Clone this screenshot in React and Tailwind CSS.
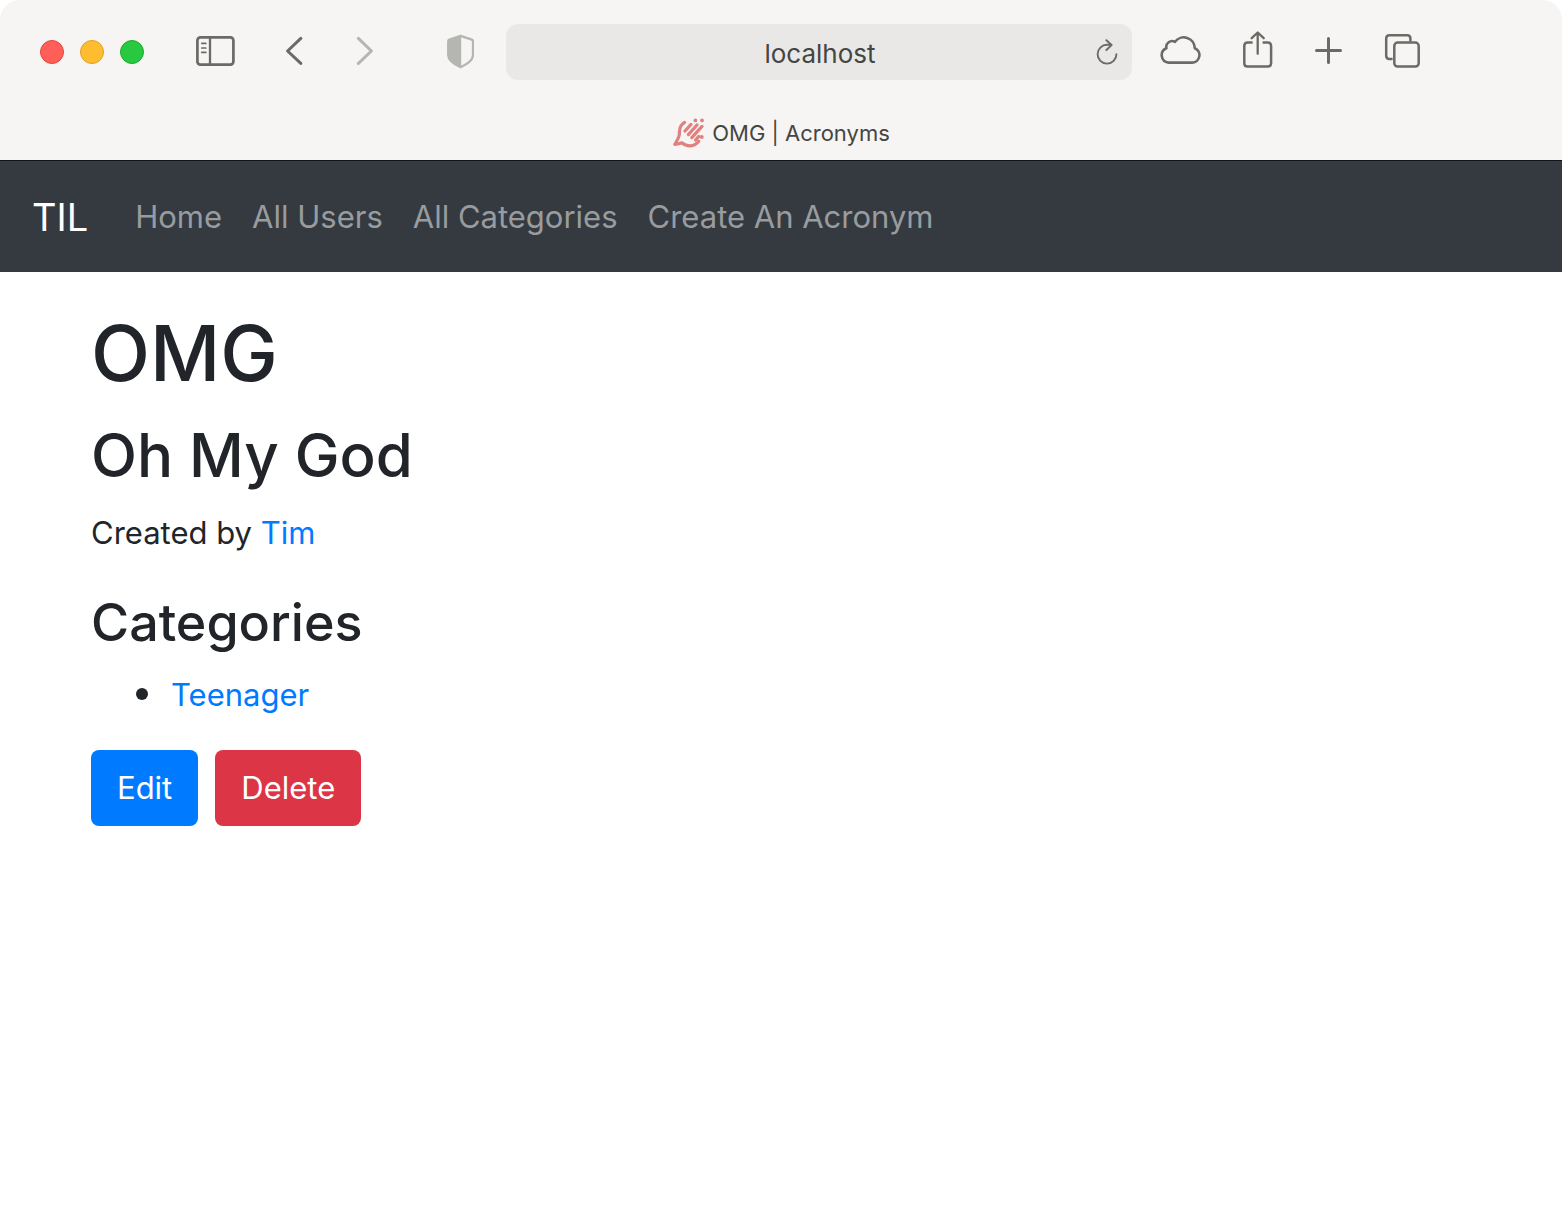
import React from "react";

const NAV_LINKS = ["Home", "All Users", "All Categories", "Create An Acronym"];

function IconButton({ label, className = "", children }) {
  return (
    <button type="button" aria-label={label} className={`block shrink-0 text-[#6b6a67] ${className}`}>
      {children}
    </button>
  );
}

const stroke = {
  fill: "none",
  stroke: "currentColor",
  strokeLinecap: "round",
  strokeLinejoin: "round",
  className: "block",
};

function SidebarIcon() {
  return (
    <svg width="39" height="42" viewBox="0 0 39 42" {...stroke} strokeWidth="2.7">
      <rect x="1.4" y="6.4" width="36" height="27.2" rx="3" />
      <path d="M14 6.5v27" strokeWidth="2.3" />
      <path d="M5.8 12.4h4M5.8 17h4M5.8 21.4h4" strokeWidth="1.7" />
    </svg>
  );
}

function BackIcon() {
  return (
    <svg width="17" height="42" viewBox="0 0 17 42" {...stroke} strokeWidth="3">
      <path d="M14.8 7.4 1.6 20 14.8 32.4" />
    </svg>
  );
}

function ForwardIcon() {
  return (
    <svg width="17" height="42" viewBox="0 0 17 42" {...stroke} strokeWidth="3">
      <path d="M2.4 7.4 15.4 20 2.4 32.4" />
    </svg>
  );
}

function ShieldIcon() {
  return (
    <svg width="27" height="42" viewBox="0 0 27 42" {...stroke} strokeWidth="2.3">
      <path d="M13.6 4.8 24.8 8.6Q26 9.1 26 10.4V24Q26 30.6 13.6 36.2 1.2 30.6 1.2 24V10.4Q1.2 9.1 2.4 8.6Z" />
      <path d="M14.2 4.8 2.4 8.6Q1.2 9.1 1.2 10.4V24Q1.2 30.6 14.2 36.2Z" fill="currentColor" stroke="none" />
    </svg>
  );
}

function ReloadIcon() {
  return (
    <svg width="22" height="26" viewBox="0 0 22 26" {...stroke} strokeWidth="1.9">
      <path d="M20.4 15.2A9.4 9.4 0 1 1 11 5.8H15" />
      <path d="M10.4 1.2 15.6 6 10.4 11" />
    </svg>
  );
}

function CloudIcon() {
  return (
    <svg width="42" height="42" viewBox="0 0 42 42" {...stroke} strokeWidth="2.6">
      <path d="M9.4 31.6H33.4A7.5 7.5 0 0 0 35.8 17.2 11 11 0 0 0 16 10.8 5.9 5.9 0 0 0 7.4 17.2 7.5 7.5 0 0 0 9.4 31.6Z" />
    </svg>
  );
}

function ShareIcon() {
  return (
    <svg width="30" height="42" viewBox="0 0 30 42" {...stroke} strokeWidth="2.5">
      <path d="M9.6 11.6H4.6Q1.3 11.6 1.3 15V32.2Q1.3 35.6 4.6 35.6H24.8Q28.1 35.6 28.1 32.2V15Q28.1 11.6 24.8 11.6H19.6" strokeLinecap="butt" />
      <path d="M14.7 22.8V1.8M8.7 7.2 14.7 1.5 20.7 7.2" strokeWidth="2.3" />
    </svg>
  );
}

function PlusIcon() {
  return (
    <svg width="27" height="42" viewBox="0 0 27 42" {...stroke} strokeWidth="3">
      <path d="M1.5 19.5h24M13.5 7.5v24" />
    </svg>
  );
}

function TabsIcon() {
  return (
    <svg width="36" height="42" viewBox="0 0 36 42" {...stroke} strokeWidth="2.5">
      <path d="M8.6 28H5.4Q2.2 28 2.2 24.8V7.6Q2.2 4.2 5.4 4.2H23.2Q26.4 4.2 26.4 7.6V10.4" strokeLinecap="butt" />
      <rect x="10.3" y="11.6" width="24.4" height="24" rx="3.4" />
    </svg>
  );
}

function HandIcon() {
  return (
    <svg width="32" height="32" viewBox="0 0 32 32" {...stroke} strokeWidth="3.2">
      <path d="M12.6 5.4Q8.4 8 7.8 12.4 7.2 14.4 7.4 17.4 7 20.6 2.8 27.4 7.4 27 9.8 25.8 13.6 29 18.4 28.8 23.4 28.4 26.8 24.2" />
      <path d="M13 14 19 7.4M16.4 17.6 25 8M19.8 20.6 30 9.4M23.6 23 26.8 19.4" />
      <path d="M23.4 3.4h.01M30 3.4h.01M29.8 20h.01" strokeWidth="3.8" />
    </svg>
  );
}

function BrowserChrome() {
  return (
    <header className="rounded-t-[20px] bg-[#f6f5f3] font-['Inter',sans-serif] text-[#454543]">
      <div className="flex h-[104px] items-center">
        <div className="flex shrink-0 gap-4 pl-10">
          <button type="button" aria-label="Close" className="size-6 rounded-full border border-[#e2463f] bg-[#ff5f57]" />
          <button type="button" aria-label="Minimize" className="size-6 rounded-full border border-[#e0a024] bg-[#febc2e]" />
          <button type="button" aria-label="Zoom" className="size-6 rounded-full border border-[#1bac2c] bg-[#28c840]" />
        </div>
        <IconButton label="Sidebar" className="ml-[52px]"><SidebarIcon /></IconButton>
        <IconButton label="Back" className="ml-[51px]"><BackIcon /></IconButton>
        <IconButton label="Forward" className="ml-[53px] text-[#b5b5b2]!"><ForwardIcon /></IconButton>
        <IconButton label="Privacy report" className="ml-[74px] text-[#b5b5b2]!"><ShieldIcon /></IconButton>
        <div className="ml-8 flex h-14 min-w-0 flex-1 items-center rounded-xl bg-[#e9e8e6] pr-3.5 pl-[38px]">
          <input
            type="text"
            aria-label="Address"
            defaultValue="localhost"
            className="min-w-0 flex-1 bg-transparent pt-1 text-center text-[26px] leading-8 outline-none"
          />
          <IconButton label="Reload"><ReloadIcon /></IconButton>
        </div>
        <div className="flex shrink-0 items-center gap-[42px] pr-[142px] pl-[27px]">
          <IconButton label="iCloud tabs"><CloudIcon /></IconButton>
          <IconButton label="Share"><ShareIcon /></IconButton>
          <IconButton label="New tab"><PlusIcon /></IconButton>
          <IconButton label="Tab overview"><TabsIcon /></IconButton>
        </div>
      </div>
      <div className="flex h-14 items-center justify-center gap-2 pt-0.5">
        <span className="text-[#e08080]"><HandIcon /></span>
        <span className="text-[22px] leading-7">OMG | Acronyms</span>
      </div>
    </header>
  );
}

export default function App() {
  return (
    <div className="min-h-screen bg-white">
      <BrowserChrome />
      <div className="font-['Inter',sans-serif] text-[31px] leading-[48px] text-[#212529]">
        <nav className="flex h-28 items-center border-t border-[#10151c] bg-[#343a40] px-8">
          <a href="#" className="mr-8 text-[38px] text-white">TIL</a>
          <ul className="flex">
            {NAV_LINKS.map((label) => (
              <li key={label}>
                <a href="#" className="block px-[15px] text-[#999c9f]">{label}</a>
              </li>
            ))}
          </ul>
        </nav>
        <main className="px-[91px] pt-[33px]">
          <h1 className="mb-4 text-[77px] leading-[96px] font-medium">OMG</h1>
          <h2 className="mb-4 text-[60px] leading-[76px] font-medium">Oh My God</h2>
          <p className="mb-8">
            Created by <a href="#" className="text-[#007bff]">Tim</a>
          </p>
          <h3 className="mb-[11px] text-[52px] leading-[68px] font-medium">Categories</h3>
          <ul className="mb-[31px] list-disc pl-[76px] marker:text-[38px]">
            <li className="pl-1"><a href="#" className="text-[#007bff]">Teenager</a></li>
          </ul>
          <div className="flex gap-[17px]">
            <a href="#" className="rounded-lg bg-[#007bff] px-[26px] py-3.5 text-white">Edit</a>
            <button type="button" className="rounded-lg bg-[#dc3545] px-[26px] py-3.5 text-white">Delete</button>
          </div>
        </main>
      </div>
    </div>
  );
}
